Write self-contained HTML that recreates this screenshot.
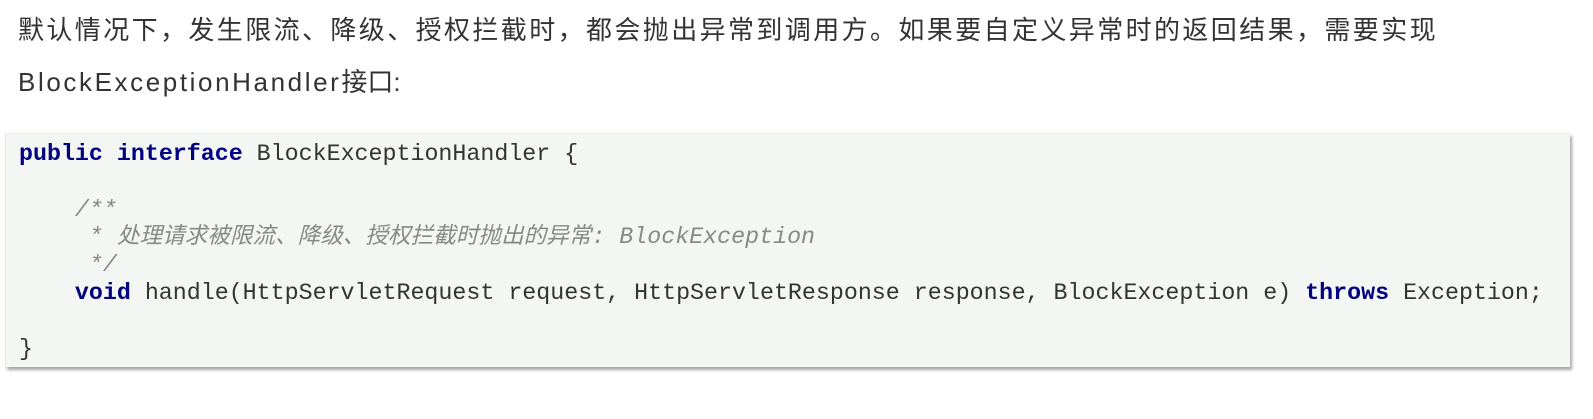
<!DOCTYPE html>
<html><head><meta charset="utf-8"><style>
html,body{margin:0;padding:0;background:#fff;width:1593px;height:419px;overflow:hidden}
.p{position:absolute;left:18px;font-family:"Liberation Sans","Noto Sans CJK SC",sans-serif;font-size:26px;color:#333;white-space:nowrap;line-height:30px}
.cn{letter-spacing:2.4px}
.code{position:absolute;left:5px;top:133px;width:1564px;height:233px;background:#f4f6f3;box-shadow:2px 3px 3px rgba(0,0,0,0.35);border-left:1px solid #e6e6e6;border-top:1px solid #ececec}
pre{margin:0;position:absolute;left:13px;top:7px;font-family:"Liberation Mono","Noto Sans CJK SC",monospace;font-size:23.3px;line-height:27.8px;color:#333}
.k{color:#000080;font-weight:bold}
.c{color:#888;font-style:italic}
.cc{font-size:22.6px}
</style></head><body>
<div class="p cn" style="top:15px">默认情况下，发生限流、降级、授权拦截时，都会抛出异常到调用方。如果要自定义异常时的返回结果，需要实现</div>
<div class="p" style="top:67px"><span style="letter-spacing:2.6px">BlockExceptionHandler</span><span>接口:</span></div>
<div class="code"><pre><span class="k">public</span> <span class="k">interface</span> BlockExceptionHandler {

    <span class="c">/**</span>
<span class="c">     * <span class="cc">处理请求被限流、降级、授权拦截时抛出的异常</span>: BlockException</span>
<span class="c">     */</span>
    <span class="k">void</span> handle(HttpServletRequest request, HttpServletResponse response, BlockException e) <span class="k">throws</span> Exception;

}</pre></div>
</body></html>
